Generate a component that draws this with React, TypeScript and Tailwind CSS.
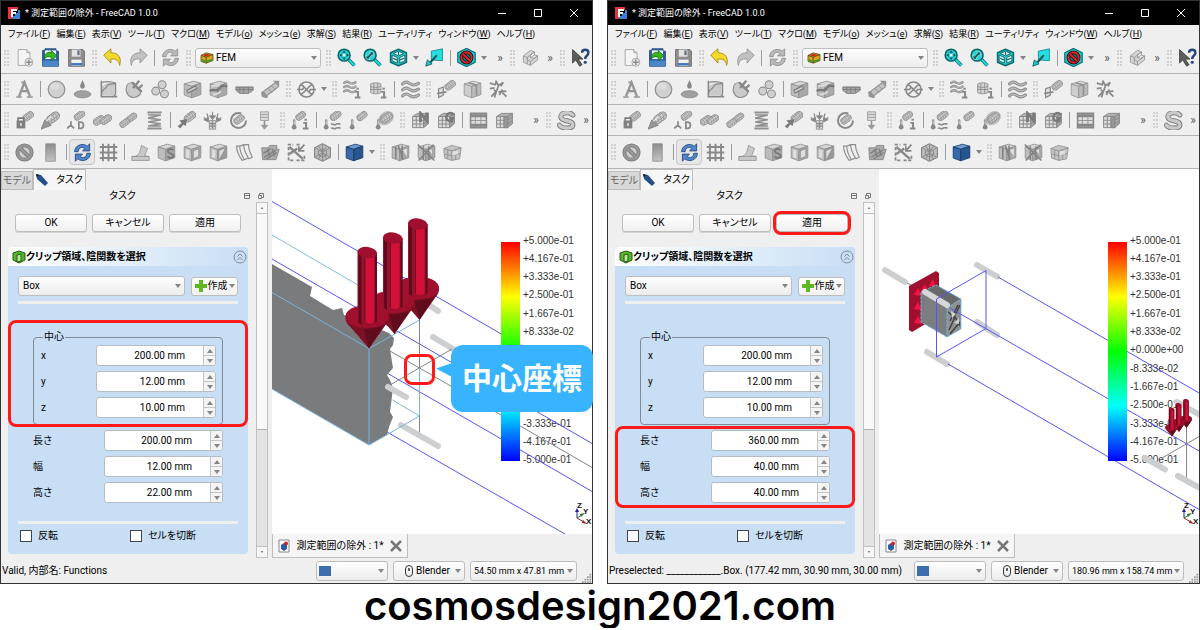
import { useId, ReactNode } from "react";
import clsx from "clsx";

const LINE = "#868686";
const FILL = "#c4c4c4";

/* ---------- icon building blocks, all on a 24x24 grid ---------- */

function Mesh({ transform }: { transform?: string }) {
  return (
    <g transform={transform} strokeLinecap="round">
      <path d="M8 15 16 9" stroke="#777" strokeWidth="14" />
      <path d="M8 15 16 9" stroke={FILL} strokeWidth="11.5" />
      <path
        d="M4 10c4 1 6 5 6 10M8 7c4 1 6 5 6 10M12 4c4 1 6 5 6 10M3 15 16 4M6 19 21 8M2 12l4 8M17 4l5 5"
        fill="none"
        stroke="#848484"
        strokeWidth="1.3"
      />
    </g>
  );
}

interface CubeProps {
  top?: string;
  left?: string;
  right?: string;
  line?: string;
}

function Cube({ top = "#d2d2d2", left = "#b4b4b4", right = "#9c9c9c", line = "#7c7c7c" }: CubeProps) {
  return (
    <g stroke={line} strokeLinejoin="round">
      <path d="M1.500 5 13 1.500 22.500 4 11 8z" fill={top} />
      <path d="M1.500 5 11 8v14.500L1.500 19z" fill={left} />
      <path d="M11 8 22.500 4v14.500L11 22.500z" fill={right} />
    </g>
  );
}

function Grid3({ children }: { children?: ReactNode }) {
  return (
    <g stroke="#777" strokeWidth="1.200">
      <path d="M2 7 8 3h14l-6 4z" fill="#a8a8a8" />
      <path d="M2 7h14v14H2z" fill="#dadada" />
      <path d="M16 7l6-4v13l-6 5z" fill="#999" />
      <path d="M6.700 7v14M11.400 7v14M2 11.700h14l6-4M2 16.400h14l6-4" fill="none" />
      {children}
    </g>
  );
}

const thermo = (
  <g>
    <path d="M4 12v7" stroke="#777" strokeWidth="3" strokeLinecap="round" />
    <circle cx="4" cy="20.500" r="3" fill="#777" />
    <path d="M4 12v5" stroke="#ddd" strokeWidth="1.200" />
  </g>
);

const waves = (
  <g fill="none" stroke="#7d7d7d" strokeWidth="4" strokeLinecap="round">
    <path d="M2 5c4-4 7-2 10 0s6 2 10-1M2 12.500c4-4 7-2 10 0s6 2 10-1M2 20c4-4 7-2 10 0s6 2 10-1" />
    <path d="M2 5c4-4 7-2 10 0s6 2 10-1M2 12.500c4-4 7-2 10 0s6 2 10-1M2 20c4-4 7-2 10 0s6 2 10-1" stroke="#b5b5b5" strokeWidth="1.500" />
  </g>
);

const info = (
  <g stroke="#777" fill="none" strokeWidth="2.500">
    <path d="M15.500 15h3.500v7M15 22h7" />
    <path d="M17 11h3" />
  </g>
);

const sync = (color: string, edge: string) => (
  <g fill={color} stroke={edge} strokeWidth="1" strokeLinejoin="round">
    <path d="M2 11C2 3 12-1 18 4l3-3v9h-9l3-3C11 4 7 6 6.500 11z" />
    <path d="M22 13c0 8-10 12-16 7l-3 3v-9h9l-3 3c4 3 8 1 8.500-4z" />
  </g>
);

const coloured = ["newFile", "open", "save", "undo", "refreshBlue", "zoomFit", "zoomSel", "isoCube", "viewArrow", "noEntry", "help", "blueCube"];

const icons: Record<string, ReactNode> = {
  newFile: (
    <g>
      <path d="M4 2h11l4 4v16H4z" fill="#f4f4f4" stroke="#9a9a9a" />
      <path d="M15 2v4h4" fill="#ddd" stroke="#9a9a9a" />
      <circle cx="17.500" cy="18" r="5" fill="#e8e8e8" stroke="#999" />
      <path d="M17.500 14.500v7M14 18h7" stroke="#8a8a8a" strokeWidth="1.800" />
    </g>
  ),
  open: (
    <g>
      <path d="M2 3h3V1h14v3h3v19H2z" fill="#2b62a8" stroke="#173c70" />
      <path d="M5 3h14v11H5z" fill="#eef3f7" />
      <path d="M2 16h20v7H2z" fill="#4d87c8" />
      <path d="M4 14C4 7 9 4 13 6V3l7 7-7 6v-4c-4-2-6-1-9 2z" fill="#37b51e" stroke="#1b6a12" />
    </g>
  ),
  save: (
    <g>
      <path d="M2 2h18l2 2v19H2z" fill="#8f8f8f" stroke="#5e5e5e" />
      <path d="M6 2h11v9H6z" fill="#e2e2e2" />
      <path d="M13 3h3v6h-3z" fill="#687687" />
      <path d="M5 14h14v9H5z" fill="#f1f1f1" stroke="#777" />
      <path d="M5 19h14v3H5z" fill="#3f78c4" />
    </g>
  ),
  undo: <path d="M1 9 10 1v5c9 0 14 6 11 16-1-6-4-9-11-8v5z" fill="#f5d92c" stroke="#9b8200" strokeLinejoin="round" />,
  redo: <path d="M23 9 14 1v5C5 6 0 12 3 22c1-6 4-9 11-8v5z" fill="#b9b9b9" stroke="#808080" strokeLinejoin="round" />,
  refresh: sync("#b0b0b0", "#777"),
  refreshBlue: sync("#4f86cc", "#1c3f73"),
  zoomFit: (
    <g>
      <path d="m14 14 8 8" stroke="#0e7d80" strokeWidth="4.500" />
      <path d="m14 14 8 8" stroke="#20dfe0" strokeWidth="2" />
      <circle cx="9" cy="9" r="7.500" fill="#27d5d8" stroke="#0b6669" strokeWidth="2" />
      <path d="M9 3 6.500 6h5zM9 15l-2.500-3h5zM3 9l3-2.500v5zM15 9l-3-2.500v5z" fill="#0b5356" />
      <path d="M7.500 7.500h3v3h-3z" fill="#fff" />
    </g>
  ),
  zoomSel: (
    <g>
      <path d="m14 14 8 8" stroke="#0e7d80" strokeWidth="4.500" />
      <path d="m14 14 8 8" stroke="#20dfe0" strokeWidth="2" />
      <circle cx="9" cy="9" r="7.500" fill="#27d5d8" stroke="#0b6669" strokeWidth="2" />
      <path d="M4 9v5h5l-1.500-1.500 4-4L13 10V5H8l1.500 1.500-4 4z" fill="#0b5356" stroke="#d8f8f8" strokeWidth=".7" />
    </g>
  ),
  isoCube: (
    <g strokeLinejoin="round">
      <path d="M12 1.500 22 6v12l-10 4.500L2 18V6z" fill="#25cfd2" stroke="#0b6e72" strokeWidth="2" />
      <path d="m12 4 6.500 3-6.500 3-6.500-3zM4 9l6.500 3v7L4 16.500zM20 9l-6.500 3v7l6.500-2.500z" fill="#d9f2f2" stroke="#0b5356" />
      <path d="M12 5v4M5 13l5 2M19 13l-5 2" stroke="#0b6e72" strokeWidth="1.500" />
    </g>
  ),
  viewArrow: (
    <g>
      <path d="m8 4 14-3v15L8 15z" fill="#22dfe2" stroke="#0d7e82" />
      <path d="m15 9-8 9" stroke="#0b5356" strokeWidth="2.500" />
      <path d="m1 23 2-8 6 5z" fill="#19c9cc" stroke="#0b5356" />
    </g>
  ),
  noEntry: (
    <g strokeLinejoin="round">
      <path d="M12 .5 23 6v12L12 23.500 1 18V6z" fill="#1fc9cc" stroke="#0b6e72" strokeWidth="1.500" />
      <circle cx="12" cy="12" r="6.500" fill="#178184" stroke="#111" strokeWidth="4.500" />
      <circle cx="12" cy="12" r="6.500" fill="none" stroke="#e2202a" strokeWidth="2.600" />
      <path d="m7.500 7.500 9 9" stroke="#111" strokeWidth="4.500" />
      <path d="m7.500 7.500 9 9" stroke="#e2202a" strokeWidth="2.600" />
    </g>
  ),
  part: (
    <g stroke="#808080" strokeLinejoin="round" fill="#d0d0d0">
      <path d="M3 10 12 3l5 2-5 4v3l4 1 5-3v5l-9 7-9-4z" />
      <path d="m3 10 5 2v8M8 12l9-7v4l4 1M12 12l5-3M8 12v3l4 2 9-7M12 17v5" fill="none" />
    </g>
  ),
  help: (
    <g>
      <path d="M2 2v17l4-4 5 8 3-2-5-7h6z" fill="#5c5f5c" stroke="#333" />
      <path d="M14 6c0-5 8-5 8 0 0 4-4 3-4 8" fill="none" stroke="#27457c" strokeWidth="3" />
      <circle cx="18" cy="18" r="2" fill="#27457c" />
    </g>
  ),
  letterA: (
    <g fill="none" stroke={LINE}>
      <path d="M5 21 12 3l7 18M8 14h8" strokeWidth="3" />
      <path d="M1.500 21.500h7M15 21.500h7.500M8 3h4" strokeWidth="2" />
    </g>
  ),
  sphere: (
    <g>
      <circle cx="12" cy="12" r="10.500" fill="#cbcbcb" stroke="#808080" strokeWidth="1.500" />
      <ellipse cx="10" cy="8" rx="6" ry="4" fill="#d9d9d9" />
    </g>
  ),
  drop: (
    <g fill="#929292">
      <path d="M12 0c2 5 3 6 3 8a3 3 0 0 1-6 0c0-2 1-3 3-8z" fill="#777" />
      <ellipse cx="12" cy="18" rx="10.500" ry="4.500" stroke="#777" />
    </g>
  ),
  chart: (
    <g>
      <path d="M3 19V9c4-5 11-7 18-6v16z" fill="#c4c4c4" />
      <path d="M3 1v20h20" fill="none" stroke="#777" strokeWidth="2" />
      <path d="M3 16c3-6 5-4 7-8s6-3 10-3M4 3c8-2 12-1 17 1v12c0 3-2 5-5 5" fill="none" stroke="#777" strokeWidth="1.500" />
    </g>
  ),
  plug: (
    <g>
      <path d="M4 5c-6 8 0 18 8 17 6-1 9-5 8-9z" fill="#c4c4c4" stroke="#808080" strokeWidth="1.500" />
      <path d="M2 7c2-3 5-4 8-4l9 9" fill="#c4c4c4" stroke="#808080" />
      <path d="m10 10 3-3M9 3l12 12M13 7l5-6M17 11l5-5" stroke="#777" strokeWidth="3" />
    </g>
  ),
  circles: (
    <g fill="#cacaca" stroke="#7c7c7c" strokeWidth="1.300">
      <circle cx="14" cy="6" r="5" />
      <circle cx="6" cy="14" r="5" />
      <circle cx="17" cy="17.500" r="5" />
    </g>
  ),
  cubeBeam: (
    <g>
      <Cube />
      <path d="m5 15 12-6" stroke="#666" strokeWidth="5" />
      <path d="m6 14.500 10-5" stroke="#c8c8c8" strokeWidth="2" />
    </g>
  ),
  cubeFlow: (
    <g>
      <Cube />
      <path d="M1 14c5-4 8 2 12-3s5-4 10-3" fill="none" stroke="#666" strokeWidth="3" />
      <path d="M3 8c5-3 7 2 10-2M5 19c5-3 7 0 10-5" fill="none" stroke="#ddd" strokeWidth="2" />
    </g>
  ),
  plate: (
    <g stroke="#666">
      <path d="M1 9h22v4l-6 4H6l-5-4z" fill="#999" />
      <path d="M1 9h22M6 9v7M11 9v8M17 9v7M1 12h22" />
    </g>
  ),
  rod: (
    <g>
      <path d="m4 18 16-12" stroke="#777" strokeWidth="8" />
      <path d="m4 18 16-12" stroke="#bbb" strokeWidth="5.500" />
      <path d="m0 15 3-1 6 7-2 2-6-2zM15 1h8v8z" fill="#858585" />
      <path d="m8 10 6 6M13 7l5 5" stroke="#777" />
    </g>
  ),
  crossCircle: (
    <g fill="none" stroke="#777" strokeWidth="2">
      <circle cx="12" cy="12" r="9.500" />
      <path d="M5 6c3 1 4 3 7 6s4 5 7 6M19 6c-3 1-4 3-7 6s-4 5-7 6M0 12h7l2-3M24 12h-7l-2 3" />
    </g>
  ),
  wavesInfo: (
    <g>
      <g transform="scale(.720)">{waves}</g>
      {info}
    </g>
  ),
  barrelInfo: (
    <g>
      <path d="M2 5c3-2 10-2 13 0v11c-3 2-10 2-13 0z" fill="#ccc" stroke="#777" />
      <path d="M2 8c3 2 10 2 13 0M6 4v13M11 4v13M2 12h13" fill="none" stroke="#777" />
      {info}
    </g>
  ),
  waves,
  meshPlane: (
    <g>
      <Mesh transform="translate(9 -1) scale(.640)" />
      <path d="M2 11 8 9v10l-6 3z" fill="#ddd" stroke="#777" strokeWidth="1.500" />
      <path d="m0 17 12-2" stroke="#777" strokeWidth="2" />
    </g>
  ),
  box: (
    <g>
      <Cube top="#dadada" left="#c8c8c8" right="#b2b2b2" line="#808080" />
      <path d="m7 3.500 10 3v13" fill="none" stroke="#808080" strokeWidth="2" />
    </g>
  ),
  spark: (
    <g fill="none" stroke="#777" strokeWidth="2.200">
      <path d="m1 4 7 2 1-4 3 5 6-4-3 5M12 7l-2 6-7 8M6 12l3 3-2 7M1 11l6-1M12 15l10-1M13 19l4-7M17 16l5 5" />
    </g>
  ),
  lock: (
    <g>
      <Mesh transform="translate(9 -1) scale(.640)" />
      <path d="M4 13V9h7v4" fill="none" stroke="#666" strokeWidth="2" />
      <path d="M2 12h11v10H2z" fill="#6d6d6d" />
      <path d="M7.500 15v4" stroke="#ddd" strokeWidth="2" />
    </g>
  ),
  pin: (
    <g>
      <Mesh transform="translate(6 -1) scale(.780)" />
      <path d="m0 23 5-12 8 7z" fill="#888" stroke="#666" />
      <path d="m7 13 6-6" stroke="#eee" strokeWidth="1.500" />
    </g>
  ),
  displacement: (
    <g>
      <Mesh transform="translate(8 -2) scale(.640)" />
      <path d="M5 13v5l-5 4M5 18l4 4M15 14v8h2c5 0 5-8 0-8z" fill="none" stroke="#777" strokeWidth="2.200" />
    </g>
  ),
  meshPair: (
    <g>
      <Mesh transform="translate(-1 4) scale(.700 .650)" />
      <Mesh transform="translate(8 3) scale(.700 .650)" />
    </g>
  ),
  mesh: (
    <g>
      <Mesh transform="translate(9 1) scale(.600)" />
      <Mesh transform="translate(0 8) scale(.600)" />
    </g>
  ),
  spring: (
    <g fill="none" stroke="#808080">
      <path d="M3 2h18M3 22h18" strokeWidth="2.500" />
      <path d="M4 5h16L4 9l16 2-16 3 16 2-16 3h16" strokeWidth="2" />
    </g>
  ),
  force: (
    <g>
      <Mesh transform="translate(8 -1) scale(.700)" />
      <path d="m13 10-2 9-3-2-4 5-3-3 5-4-3-3z" fill="#666" />
    </g>
  ),
  pressure: (
    <g fill="#777" stroke="#777">
      <path d="M8 12h8v11H8z" fill="#ccc" />
      <path d="M8 16h8M8 19h8M12 13v9M12 1v7M5 3l2 8M19 3l-2 8M1 8l5 5M23 8l-5 5" fill="none" strokeWidth="1.500" />
      <path d="M8 6h8l-4 5zM1 11l6-3v6zM23 11l-6-3v6z" />
    </g>
  ),
  spin: (
    <g fill="none">
      <circle cx="12" cy="12" r="9.500" stroke="#777" strokeWidth="2.500" strokeDasharray="48 12" />
      <Mesh transform="translate(5 3) scale(.640)" />
    </g>
  ),
  gravity: (
    <g stroke="#888" fill="#d6d6d6">
      <path d="M7 1h10v11H7zM7 4.500h10M7 8h10" />
      <path d="M12 12v8" strokeWidth="2" />
      <path d="M8 18h8l-4 5z" fill="#888" />
    </g>
  ),
  tempInfo: (
    <g>
      <Mesh transform="translate(5 -1) scale(.600)" />
      {thermo}
      {info}
    </g>
  ),
  tempFlow: (
    <g>
      <Mesh transform="translate(8 -2) scale(.660)" />
      {thermo}
      <path d="M10 17c3-2 4 2 6 0s3 0 6-1M10 22c3-2 4 2 6 0s3 0 6-1" fill="none" stroke="#777" strokeWidth="2" />
    </g>
  ),
  tempMesh: (
    <g>
      <Mesh transform="translate(9 -1) scale(.620)" />
      {thermo}
    </g>
  ),
  tempBody: (
    <g>
      <ellipse cx="14" cy="9" rx="10.500" ry="8" fill="#b0b0b0" transform="rotate(-35 14 9)" />
      <Mesh transform="translate(6 0) scale(.700)" />
      {thermo}
    </g>
  ),
  gridN: (
    <Grid3>
      <path d="M12 14V3l8 9V2" fill="none" stroke="#666" strokeWidth="3.500" />
    </Grid3>
  ),
  gridG: (
    <Grid3>
      <path d="M21 5c-4-5-10-1-9 4s8 5 8 0h-4" fill="none" stroke="#666" strokeWidth="3" />
    </Grid3>
  ),
  film: (
    <g stroke="#777" fill="#dcdcdc">
      <path d="M2 3h20v18H2z" strokeWidth="2" />
      <path d="M2 6h20M2 18h20" strokeWidth="4" />
      <path d="M8 3v18M15 3v18M2 12h20" />
    </g>
  ),
  gridBox: (
    <Grid3>
      <path d="M11.400 7h4.600v14h-4.600z" fill="#888" />
    </Grid3>
  ),
  solver: (
    <g fill="none" strokeLinecap="round">
      <path d="M20 5C15 0 4 2 5 8s15 3 15 9-13 6-17 1" stroke="#6d6d6d" strokeWidth="6.500" />
      <path d="M20 5C15 0 4 2 5 8s15 3 15 9-13 6-17 1" stroke="#c4c4c4" strokeWidth="4" />
    </g>
  ),
  banned: (
    <g fill="none">
      <circle cx="12" cy="12" r="9" fill="#c9c9c9" stroke="#6d6d6d" strokeWidth="5" />
      <path d="m6 6 12 12" stroke="#6d6d6d" strokeWidth="5" />
      <circle cx="12" cy="12" r="9" stroke="#8c8c8c" strokeWidth="2.500" />
      <path d="m6 6 12 12" stroke="#8c8c8c" strokeWidth="2.500" />
    </g>
  ),
  gradient: (
    <g>
      <linearGradient id="grey" x1="0" x2="0" y1="0" y2="1">
        <stop offset="0" stopColor="#7c7c7c" />
        <stop offset="1" stopColor="#bdbdbd" />
      </linearGradient>
      <path d="M6 1h12v22H6z" fill="url(#grey)" stroke="#777" />
    </g>
  ),
  hash: (
    <g fill="none" stroke="#777" strokeWidth="2.400">
      <path d="M5 1v22M12 1v22M19 1v22M1 5h22M1 12h22M1 19h22" />
    </g>
  ),
  bend: (
    <g stroke="#808080" strokeLinejoin="round">
      <path d="M1 17c8 1 11-5 12-14l8 4c-2 4-2 6-4 9l6 1v5H1z" fill="#c2c2c2" />
      <path d="M1 17h22" />
    </g>
  ),
  cubeS: (
    <g>
      <Cube />
      <path d="M21 9c-3-3-8-1-7 2s7 2 7 5-5 4-8 1" fill="none" stroke="#666" strokeWidth="2.500" />
    </g>
  ),
  cubeOpen: (
    <g>
      <Cube />
      <path d="m13 10 7-3v10l-7 3z" fill="#ddd" stroke="#777" />
      <path d="m4 8 4 1v10l-4-1z" fill="#ddd" />
    </g>
  ),
  cubeSlice: (
    <g>
      <Cube right="#8a8a8a" />
      <path d="M13 10v10l7-13z" fill="#ddd" />
      <path d="m4 8 4 1v10l-4-1z" fill="#ddd" />
    </g>
  ),
  sheets: (
    <g fill="none" stroke="#808080" strokeWidth="1.500">
      <path d="M2 4h4c0 8 3 12 6 17l-3 1C4 15 2 11 2 4zM6 4l5-2c0 8 3 12 6 17l-5 2M11 2h6c0 7 2 10 5 16l-5 2" />
    </g>
  ),
  folder: (
    <g>
      <path d="M1 6h8l2-3h9v5h3l-4 13H2z" fill="#a0a0a0" stroke="#6d6d6d" />
      <path d="m4 18 15-9M7 20 20 12M3 13l9-6M8 8l4 10M14 7l3 9" stroke="#6d6d6d" strokeWidth="1.800" />
    </g>
  ),
  probe: (
    <g fill="none" stroke="#777" strokeWidth="2.200">
      <path d="M2 9V2h6M12 2h5M2 12v10h7M12 22h10v-6" strokeDasharray="4 2" />
      <path d="M3 5 20 20M3 14l10-7" strokeWidth="3" />
      <path d="m15 10 7-8M15 4v6h7" />
    </g>
  ),
  hexMesh: (
    <g stroke="#777" strokeLinejoin="round">
      <path d="M12 1 22 6v12l-10 5-10-5V6z" fill="#b4b4b4" strokeWidth="1.500" />
      <path d="M12 2v20M3 6l18 12M21 6 3 18M7 4l10 16M17 4 7 20M12 7l5 3v5l-5 3-5-3v-5z" fill="none" strokeWidth="1.200" />
    </g>
  ),
  blueCube: <Cube top="#6b9bd2" left="#3669ae" right="#275590" line="#15355f" />,
  clipA: (
    <g>
      <Cube />
      <path d="M6 4v16M9 3l6 17M14 3v18" stroke="#6f6f6f" strokeWidth="2" />
      <path d="m15 9 5-2v10z" fill="#e0e0e0" />
    </g>
  ),
  clipB: (
    <g>
      <Cube />
      <path d="m1 2 21 20M21 2 2 22M8 4v17M15 4v17" stroke="#6f6f6f" strokeWidth="1.800" />
      <path d="m15 9 4-1v6z" fill="#e0e0e0" />
    </g>
  ),
  clipC: (
    <g>
      <path d="m1 7 10-4 12 3-2 14-10 2-9-3z" fill="#bdbdbd" stroke="#7c7c7c" />
      <path d="m1 7 10 3 12-4M11 10v12M6 9v11M16 8v13M2 14l9 2 11-3" fill="none" stroke="#777" />
      <path d="m12 11 7-2v5l-7 2z" fill="#ddd" />
    </g>
  ),
};

/* ---------- toolbar parts ---------- */

function Tool({ name, active }: { name: string; active?: boolean }) {
  return (
    <button
      type="button"
      aria-label={name}
      className={clsx(
        "flex h-[26px] w-[26px] shrink-0 items-center justify-center rounded-sm",
        active && "border border-[#c6c6c6] bg-[#e6e6e6]"
      )}
    >
      <svg viewBox="0 0 24 24" className={clsx("h-[19px] w-[19px] shrink-0", !coloured.includes(name) && "opacity-85")} fill="none">
        {icons[name]}
      </svg>
    </button>
  );
}

function Grip({ className }: { className?: string }) {
  return (
    <span className={clsx("flex w-[10px] shrink-0 justify-center gap-px", className)}>
      <span className="h-4 border-l-2 border-dotted border-[#cfcfcf]" />
      <span className="h-4 border-l-2 border-dotted border-[#cfcfcf]" />
    </span>
  );
}

function Sep() {
  return (
    <span className="flex w-[6px] shrink-0 justify-center">
      <span className="h-4 w-px bg-[#9b9b9b]" />
    </span>
  );
}

function Arrow({ className, up }: { className?: string; up?: boolean }) {
  return (
    <svg viewBox="0 0 6 4" className={clsx("h-1 w-1.5 shrink-0", className)} fill="#858585">
      {up ? <path d="M0 4h6L3 0z" /> : <path d="M0 0h6L3 4z" />}
    </svg>
  );
}

function Drop() {
  return (
    <button type="button" aria-label="menu" className="flex h-[26px] w-[10px] shrink-0 items-center justify-center">
      <Arrow />
    </button>
  );
}

function More({ className }: { className?: string }) {
  return (
    <button type="button" className={clsx("w-[14px] shrink-0 text-center text-[12px] leading-3 text-[#555]", className)}>
      »
    </button>
  );
}

function Tools({ names }: { names: string[] }) {
  return (
    <>
      {names.map((name) => (
        <Tool key={name} name={name} />
      ))}
    </>
  );
}

interface PickerProps {
  label: string;
  value: string;
  className?: string;
  selectClassName?: string;
  children?: ReactNode;
}

function Picker({ label, value, className, selectClassName, children }: PickerProps) {
  return (
    <div
      className={clsx(
        "relative flex h-5 shrink-0 items-center rounded-[3px] border border-[#bdbdbd] bg-linear-to-b from-[#fefefe] to-[#ececec]",
        className
      )}
    >
      <span className="pointer-events-none absolute left-1 flex items-center">{children}</span>
      <select aria-label={label} className={clsx("h-full w-full appearance-none bg-transparent text-black", selectClassName)}>
        <option>{value}</option>
      </select>
      <Arrow className="pointer-events-none absolute right-[3px]" />
    </div>
  );
}

function Toolbars() {
  const row = "flex items-center overflow-hidden border-b border-[#b4b4b4]";
  return (
    <div>
      <div className={clsx(row, "h-8")}>
        <Grip />
        <Tools names={["newFile", "open", "save"]} />
        <Grip />
        <Tools names={["undo", "redo"]} />
        <Sep />
        <Tool name="refresh" />
        <Grip />
        <Picker label="ワークベンチ" value="FEM" className="ml-0.5 w-[126px]" selectClassName="pl-5">
          <svg viewBox="0 0 16 14" className="h-3 w-3.5">
            <path d="m1 4 6-3 8 2v7l-8 3-6-2z" fill="#e2a01d" stroke="#4e5a16" />
            <path d="m1 4 6 2 8-3M7 6v7" stroke="#3c4b12" fill="none" />
            <path d="M2 3.500 7 2l6 1.500L7 5z" fill="#cf2b1d" />
            <path d="m2 8 4 2v2l-4-1zM8 10l6-2v2l-6 2z" fill="#3c9a30" />
          </svg>
        </Picker>
        <Grip className="ml-0.5" />
        <Tools names={["zoomFit", "zoomSel", "isoCube"]} />
        <Drop />
        <Tool name="viewArrow" />
        <Sep />
        <Tool name="noEntry" />
        <Drop />
        <More className="ml-1" />
        <Grip />
        <Tool name="part" />
        <More />
        <Grip />
        <Tool name="help" />
      </div>
      <div className={clsx(row, "h-[31px]")}>
        <Grip />
        <Tool name="letterA" />
        <Sep />
        <Tools names={["sphere", "drop", "chart", "plug", "circles"]} />
        <Sep />
        <Tools names={["cubeBeam", "cubeFlow", "plate", "rod"]} />
        <Grip />
        <Tool name="crossCircle" />
        <Drop />
        <Grip />
        <Tools names={["wavesInfo", "barrelInfo"]} />
        <Sep />
        <Tool name="waves" />
        <Grip />
        <Tools names={["meshPlane", "box", "spark"]} />
      </div>
      <div className={clsx(row, "h-[31px]")}>
        <Grip />
        <Tools names={["lock", "pin", "displacement", "meshPair", "mesh", "spring"]} />
        <Sep />
        <Tools names={["force", "pressure", "spin", "gravity"]} />
        <Grip />
        <Tool name="tempInfo" />
        <Sep />
        <Tools names={["tempFlow", "tempMesh", "tempBody"]} />
        <Grip />
        <Tools names={["gridN", "gridG"]} />
        <Sep />
        <Tools names={["film", "gridBox"]} />
        <More className="ml-3" />
        <Grip />
        <Tool name="solver" />
        <More />
      </div>
      <div className={clsx(row, "h-[33px]")}>
        <Grip />
        <Tools names={["banned", "gradient"]} />
        <Sep />
        <Tool name="refreshBlue" active />
        <Tool name="hash" />
        <Sep />
        <Tools names={["bend", "cubeS", "cubeOpen", "cubeSlice", "sheets", "folder", "probe", "hexMesh"]} />
        <Sep />
        <Tool name="blueCube" />
        <Drop />
        <Grip />
        <Tools names={["clipA", "clipB", "clipC"]} />
      </div>
    </div>
  );
}

/* ---------- title and menu ---------- */

const menus: [string, string][] = [
  ["ファイル", "F"],
  ["編集", "E"],
  ["表示", "V"],
  ["ツール", "T"],
  ["マクロ", "M"],
  ["モデル", "o"],
  ["メッシュ", "e"],
  ["求解", "S"],
  ["結果", "R"],
  ["ユーティリティ", ""],
  ["ウィンドウ", "W"],
  ["ヘルプ", "H"],
];

function TitleBar() {
  return (
    <header className="flex h-6 items-center bg-black pr-3 pl-[7px] text-[9px] text-white">
      <svg viewBox="0 0 12 12" className="h-3 w-3">
        <path d="M0 0h10v3H4v9H0z" fill="#e8323c" />
        <path d="M4 9h3V6h3V3h2v9H4z" fill="#3d7fd6" />
        <path d="M3 2h6v2H5v1h3v2H5v3H3z" fill="#fff" />
      </svg>
      <h1 className="ml-[5px] flex-1 whitespace-nowrap">* 測定範囲の除外 - FreeCAD 1.0.0</h1>
      <div className="flex gap-6">
        <button type="button" aria-label="最小化">
          <svg viewBox="0 0 12 12" className="h-3 w-3" stroke="#fff">
            <path d="M2 6.500h8" />
          </svg>
        </button>
        <button type="button" aria-label="最大化">
          <svg viewBox="0 0 12 12" className="h-3 w-3" stroke="#fff" fill="none">
            <path d="M2.500 2.500h7v7h-7z" />
          </svg>
        </button>
        <button type="button" aria-label="閉じる">
          <svg viewBox="0 0 12 12" className="h-3 w-3" stroke="#fff">
            <path d="m2 2 8 8M10 2l-8 8" />
          </svg>
        </button>
      </div>
    </header>
  );
}

function MenuBar() {
  return (
    <nav className="flex h-[17px] items-center gap-1.5 overflow-hidden px-[7px] text-[9px]">
      {menus.map(([text, key]) => (
        <button key={text} type="button" className="shrink-0 whitespace-nowrap">
          {text}
          {key && (
            <>
              (<u>{key}</u>)
            </>
          )}
        </button>
      ))}
    </nav>
  );
}

/* ---------- task panel ---------- */

function Highlight({ className }: { className: string }) {
  return <span className={clsx("pointer-events-none absolute rounded-lg border-[3px] border-[#ff1a1a]", className)} />;
}

function Spin({ label, value, indent }: { label: string; value: string; indent: string }) {
  const id = useId();
  return (
    <div className="flex h-[21px] items-center">
      <label htmlFor={id} className={clsx("shrink-0", indent)}>
        {label}
      </label>
      <div className="flex h-full flex-1 overflow-hidden rounded-[3px] border border-[#b5bcc4] bg-white">
        <input id={id} defaultValue={value} className="w-0 flex-1 bg-transparent pr-[18px] text-right outline-none" />
        <div className="flex w-3 flex-col divide-y divide-[#c4c4c4] border-l border-[#c4c4c4] bg-[#f4f4f4]">
          <button type="button" aria-label={label + " +"} className="flex flex-1 items-center justify-center">
            <Arrow up />
          </button>
          <button type="button" aria-label={label + " -"} className="flex flex-1 items-center justify-center">
            <Arrow />
          </button>
        </div>
      </div>
    </div>
  );
}

function Check({ label }: { label: string }) {
  return (
    <label className="flex flex-1 items-center gap-1.5 pl-0.5 leading-3">
      <input type="checkbox" className="h-3 w-3 appearance-none border border-[#444] bg-white" />
      {label}
    </label>
  );
}

interface ViewState {
  sizes: string[];
  focus: "center" | "size";
}

function TaskPanel({ sizes, focus }: ViewState) {
  const button =
    "relative h-[18px] flex-1 rounded-[3px] border border-[#bdbdbd] bg-linear-to-b from-white to-[#f0f0f0] leading-4 shadow-[0_1px_0_#d4d4d4]";
  return (
    <aside className="flex w-[271px] shrink-0 flex-col">
      <div role="tablist" className="flex h-[21px] items-end">
        <button type="button" role="tab" className="h-[19px] w-8 border border-[#bdbdbd] bg-[#d8d8d8] text-[#666]">
          モデル
        </button>
        <button
          type="button"
          role="tab"
          aria-selected
          className="flex h-[21px] w-[53px] items-center justify-center gap-2 border border-b-0 border-[#bdbdbd] bg-[#f6f6f6]"
        >
          <svg viewBox="0 0 12 12" className="h-3 w-3">
            <path d="m0 0 5 1 7 8-3 3-8-7z" fill="#284f86" />
            <path d="m0 0 3 1-2 2z" fill="#111" />
          </svg>
          タスク
        </button>
      </div>
      <div className="flex h-3 items-center gap-[6px] pr-[7px] pl-[7px]">
        <h2 className="flex-1 text-center leading-3">タスク</h2>
        <svg viewBox="0 0 8 8" className="h-2 w-2" fill="none" stroke="#777">
          <path d="M1.500 1.500h5v5h-5zM1 3.500h6" />
        </svg>
        <svg viewBox="0 0 8 8" className="h-2 w-2" fill="none" stroke="#777">
          <path d="M2.500 3V1.500h4v4H5M1.500 3.500h3v3h-3z" />
        </svg>
      </div>
      <div className="flex flex-1">
        <div className="flex flex-1 flex-col pt-3 pr-2 pl-[7px]">
          <div className="flex gap-[5px] px-[7px]">
            <button type="button" className={button}>
              OK
            </button>
            <button type="button" className={button}>
              キャンセル
            </button>
            <button type="button" className={button}>
              適用
              {focus === "size" && <Highlight className="-inset-1" />}
            </button>
          </div>
          <section className="mt-[15px] rounded-sm bg-[#c8def5]">
            <div className="flex h-[19px] items-center justify-between rounded-t-sm bg-linear-to-r from-white to-[#c8def5] pr-px pl-1">
              <h3 className="flex items-center font-bold whitespace-nowrap">
                <svg viewBox="0 0 14 14" className="h-3.5 w-3.5">
                  <path d="m1 3 6-2 6 2v7l-6 3-6-3z" fill="#57b52b" stroke="#245c12" />
                  <path d="m5 5 4-1v7l-4 1z" fill="#b8e79b" stroke="#245c12" />
                </svg>
                クリップ領域、陰関数を選択
              </h3>
              <button type="button" aria-label="折りたたむ">
                <svg viewBox="0 0 14 14" className="h-3.5 w-3.5" fill="none" stroke="#7f8b98">
                  <circle cx="7" cy="7" r="6" />
                  <path d="m4.500 6.500 2.500-2.500 2.500 2.500M4.500 10 7 7.500 9.500 10" />
                </svg>
              </button>
            </div>
            <div className="px-2.5 pt-2.5 pb-3">
              <div className="flex items-center gap-1.5">
                <Picker label="陰関数" value="Box" className="flex-1" selectClassName="pl-1" />
                <button
                  type="button"
                  className="flex h-[19px] w-[47px] shrink-0 items-center justify-center gap-px rounded-[3px] border border-[#bdbdbd] bg-linear-to-b from-white to-[#f0f0f0]"
                >
                  <svg viewBox="0 0 12 12" className="h-3 w-3 shrink-0">
                    <path d="M4 0h4v4h4v4H8v4H4V8H0V4h4z" fill="#5fb81f" />
                  </svg>
                  <span className="whitespace-nowrap">作成</span>
                  <Arrow />
                </button>
              </div>
              <hr className="mt-[5px] h-[3px] border-0 bg-[#eeeeee]" />
              <div className="relative mx-[15px] mt-[26px]">
                <fieldset className="rounded-sm border border-[#7f8a96] pt-px pr-1.5 pb-1.5 pl-[7px]">
                  <legend className="ml-0.5 px-px leading-[14px]">中心</legend>
                  <div className="flex flex-col gap-[5px]">
                    <Spin label="x" value="200.00 mm" indent="w-[55px]" />
                    <Spin label="y" value="12.00 mm" indent="w-[55px]" />
                    <Spin label="z" value="10.00 mm" indent="w-[55px]" />
                  </div>
                </fieldset>
                {focus === "center" && <Highlight className="-inset-x-[25px] -top-[10px] -bottom-[2px]" />}
              </div>
              <div className="relative mx-[15px] mt-[5px] flex flex-col gap-[5px]">
                <Spin label="長さ" value={sizes[0]} indent="w-[71px]" />
                <Spin label="幅" value={sizes[1]} indent="w-[71px]" />
                <Spin label="高さ" value={sizes[2]} indent="w-[71px]" />
                {focus === "size" && <Highlight className="-inset-x-[25px] -top-1 -bottom-[5px]" />}
              </div>
              <hr className="mt-[18px] h-[3px] border-0 bg-[#eeeeee]" />
              <div className="mt-1.5 flex">
                <Check label="反転" />
                <Check label="セルを切断" />
              </div>
            </div>
          </section>
        </div>
        <div className="mr-1 flex w-3 flex-col border border-[#c0c0c0] bg-[#e3e3e3]">
          <span className="flex h-[11px] items-center justify-center border-b border-[#c0c0c0] bg-[#f7f7f7]">
            <Arrow up className="scale-50" />
          </span>
          <span className="h-[216px] border-b border-[#b0b0b0] bg-[#f9f9f9]" />
          <span className="flex-1" />
          <span className="flex h-[11px] items-center justify-center border-t border-[#c0c0c0] bg-[#f7f7f7]">
            <Arrow className="scale-50" />
          </span>
        </div>
      </div>
    </aside>
  );
}

/* ---------- 3D view ---------- */

const scale = [
  "+5.000e-01",
  "+4.167e-01",
  "+3.333e-01",
  "+2.500e-01",
  "+1.667e-01",
  "+8.333e-02",
  "+0.000e+00",
  "-8.333e-02",
  "-1.667e-01",
  "-2.500e-01",
  "-3.333e-01",
  "-4.167e-01",
  "-5.000e-01",
];

// coordinates are those of the whole sheet, x is the left edge of the bar
function Labels({ x, covered = [] }: { x: number; covered?: number[] }) {
  return (
    <g fill="#333" fontSize="10" fontFamily="Liberation Sans, sans-serif">
      {scale.map(
        (text, i) =>
          !covered.includes(i) && (
            <text key={text} x={x + 22} y={Math.round(243.500 + i * 18.300)}>
              {text}
            </text>
          )
      )}
    </g>
  );
}

function Bar({ x }: { x: number }) {
  return (
    <>
      <linearGradient id={"rainbow" + x} x1="0" x2="0" y1="0" y2="1">
        <stop offset="0" stopColor="#ff0000" />
        <stop offset=".250" stopColor="#ffff00" />
        <stop offset=".500" stopColor="#00ff00" />
        <stop offset=".750" stopColor="#00ffff" />
        <stop offset="1" stopColor="#0000ff" />
      </linearGradient>
      <rect x={x} y="242" width="19" height="219" fill={`url(#rainbow${x})`} />
    </>
  );
}

function Axes({ x }: { x: number }) {
  return (
    <g transform={`translate(${x} 518)`} fontSize="8" fontWeight="700" fontFamily="Liberation Sans, sans-serif" fill="#111">
      <path d="M0 0v-8" stroke="#23238e" />
      <path d="m-2-6 2-4 2 4z" fill="#23238e" />
      <path d="m0 0 5-3" stroke="#1d7a2a" />
      <path d="m3-4 5-1-4 4z" fill="#1d7a2a" />
      <path d="m0 0 7 4" stroke="#9c2020" />
      <path d="m6 2 4 4-5-1z" fill="#9c2020" />
      <text x="0" y="-10">Z</text>
      <text x="6" y="-4">Y</text>
      <text x="9" y="6">X</text>
    </g>
  );
}

// load arrow with its tip at the origin
function Load({ transform }: { transform: string }) {
  return (
    <g transform={transform}>
      <path d="M-23.500-31c0-16 43-16 43 0 0 4-2 6-4 9L0 0-19-22c-3-3-4.500-5-4.500-9z" fill="#7c1024" />
      <path d="M0 0-5-19 14-22z" fill="#600c1c" />
      <ellipse cx="-2" cy="-32" rx="21.500" ry="11.500" fill="#a0102e" />
      <path d="M-11.500-97v70c4 5 15 5 19.500 0v-69z" fill="#98102c" />
      <path d="M-10.500-96v70l3 2v-71zM6-95l2-1v69l-2 1z" fill="#5f0b1b" />
      <path d="M-4-91H5v64c-3 3-6 3-9 0z" fill="#d31138" />
      <path d="M-4-91v64" stroke="#6d0e20" strokeWidth="1" />
      <ellipse cx="-1.750" cy="-96" rx="9.800" ry="5.500" fill="#a0102e" transform="rotate(8 -1.750 -96)" />
    </g>
  );
}

const rodStyle = { stroke: "#cdced0", strokeWidth: 6, strokeLinecap: "round" as const };

function CenterScene() {
  return (
    <svg viewBox="272 169 320 365" className="block h-full w-full" fill="none">
      <Labels x={501} covered={[6, 7, 8, 9]} />
      <path {...rodStyle} d="m426 303 12 8M433 337l25 15" />
      <g stroke="#5656f5">
        <path d="m272 201.500 321 185.500M272 259l321 185M387 373l206 119M387 432l178 102" />
      </g>
      <path d="m272 235 98 57" stroke="#82bce6" />
      <path d="m390 351 203 117M390 385l62-36M419.500 320v113" stroke="#858585" />
      <path
        d="M272 264 312 287 310 296 333 310 342 308 344 315 389 333 394 338 393 345 390 349 392 362 393 368 387 375 390 380 393 388 390 412 393 417 389 427 387 435 369 445 272 389z"
        fill="#797b7c"
      />
      <path {...rodStyle} d="m388 387 18 10M401 425l37 21" />
      <path
        d="m272 292.500 97 56v96.500l-97-56M369 348.500l50.500-28.500M369 445l50.500-29-27-16M419.500 368v48"
        stroke="#7ab4de"
      />
      <Bar x={501} />
      <Load transform="translate(419.500 320)" />
      <Load transform="translate(394.500 334)" />
      <Load transform="translate(369 348.500)" />
      <Axes x={577} />
    </svg>
  );
}

function SizeScene() {
  return (
    <svg viewBox="879 169 320 365" className="block h-full w-full" fill="none">
      <Labels x={1108} />
      <path d="m905 282 14 7" stroke="#777" />
      <path d="m909 286 27-15 3 2v43l-27 16-3-2z" fill="#a0102e" />
      <path
        d="m933 279-4 7 7 1zM925 284l-4 7 7 1zM918 288l-4 7 8 1zM918 302l-4 7 8 1zM918 316l-4 7 8 1z"
        fill="#f41443"
      />
      <path {...rodStyle} d="m885 270 20 12M977 265l20 11.500M977 322l20 13M927 352l20 12" />
      <path d="m921 292 26 16v29l-26-15z" fill="#7b7d7e" />
      <path d="m921 292 15-7 25 14-14 9z" fill="#67696a" />
      <path d="m947 308 14-9v30l-14 8z" fill="#8f9192" />
      <path d="m948 312 6 5 6-12M949 330l6-13 5 9M950 334l10-12M950 321l8-16" stroke="#3f4142" strokeWidth="1.500" />
      <path d="m951 311 5 3-4 4zM954 323l5-5v6z" fill="#cfd0d1" />
      <path d="m921 292 15-7 25 14v30l-14 8-26-15zM947 308v29M947 308l14-9" stroke="#6fb2e2" strokeDasharray="3 1" />
      <path d="m925 292 22 13" stroke="#d6d7d8" strokeWidth="6" strokeLinecap="round" />
      <path d="m1162 458 38-22M1186.500 426v54" stroke="#858585" />
      <g stroke="#5656f5">
        <path d="m936.500 299 49.500-28.500v58L936.500 357zM998 277l202 116.500M950 308l250 143.500M948 364l252 146" />
      </g>
      <path {...rodStyle} d="m1177 402 23 13M1145 458l20 11.500M1178 476l22 12" />
      <Bar x={1108} />
      <Load transform="translate(1186.500 428) scale(.285)" />
      <Load transform="translate(1179 432) scale(.285)" />
      <Load transform="translate(1172 436.500) scale(.285)" />
      <Axes x={1184} />
    </svg>
  );
}

function Callout() {
  return (
    <>
      <Highlight className="top-[185px] left-[132px] h-[31px] w-[31px] rounded-[5px]" />
      <div className="absolute top-[176px] -right-px flex h-[67px] w-[142px] items-center justify-center rounded-xl bg-[#38b4ff] text-[30px] font-bold text-white">
        <svg viewBox="0 0 16 16" className="absolute top-4 -left-[15px] h-4 w-4" fill="#38b4ff">
          <path d="m0 7.500 16-5.500v14z" />
        </svg>
        中心座標
      </div>
    </>
  );
}

/* ---------- windows ---------- */

function DocumentTab() {
  return (
    <div className="flex h-6">
      <div className="flex w-[136px] items-center border border-t-0 border-[#bdbdbd] bg-[#f5f5f5] pl-[5px]">
        <svg viewBox="0 0 12 14" className="h-3.5 w-3">
          <path d="M1 1h10v12H1z" fill="#fff" stroke="#888" />
          <path d="m3 6 3-2 3 2v4l-3 2-3-2z" fill="#2c5ea6" />
          <circle cx="8" cy="4.500" r="2" fill="#d32222" />
        </svg>
        <span className="ml-1.5 flex-1 text-center whitespace-nowrap">測定範囲の除外 : 1*</span>
        <button type="button" aria-label="タブを閉じる" className="mr-[5px] ml-1.5">
          <svg viewBox="0 0 12 12" className="h-3 w-3" stroke="#777" strokeWidth="2.500">
            <path d="m1 1 10 10M11 1 1 11" />
          </svg>
        </button>
      </div>
    </div>
  );
}

function StatusBar({ status, dimensions, wide }: { status: string; dimensions: string; wide?: boolean }) {
  return (
    <footer className="flex h-[25px] items-center gap-[5px] pl-px">
      <p className="flex-1 overflow-hidden whitespace-nowrap">{status}</p>
      <Picker label="表示" value=" " className="w-[72px]">
        <span className="-ml-0.5 h-2.5 w-3 bg-[#3b6fae]" />
      </Picker>
      <Picker label="ナビゲーション" value="Blender" className="w-[72px]" selectClassName="pl-[22px]">
        <svg viewBox="0 0 10 12" className="ml-1.5 h-3 w-2.5" fill="none" stroke="#333">
          <rect x="1.500" y=".500" width="7" height="11" rx="3.500" />
          <path d="M5 3v3" strokeWidth="1.500" />
        </svg>
      </Picker>
      <Picker
        label="寸法"
        value={dimensions}
        className={wide ? "w-[116px]" : "w-[107px]"}
        selectClassName="pl-[3px] text-[9px]"
      />
      <svg viewBox="0 0 12 12" className="h-2.5 w-2.5 self-end" fill="#999">
        <path d="M9 1h2v2H9zM6 4h2v2H6zM9 4h2v2H9zM3 7h2v2H3zM6 7h2v2H6zM9 7h2v2H9zM0 10h2v2H0zM3 10h2v2H3zM6 10h2v2H6zM9 10h2v2H9z" />
      </svg>
    </footer>
  );
}

interface WindowProps extends ViewState {
  status: string;
  dimensions: string;
  wide?: boolean;
  children: ReactNode;
}

function FreeCadWindow({ sizes, focus, status, dimensions, wide, children }: WindowProps) {
  return (
    <section className="flex min-w-0 flex-col border border-[#333] bg-[#efefef]">
      <TitleBar />
      <MenuBar />
      <Toolbars />
      <div className="flex">
        <TaskPanel sizes={sizes} focus={focus} />
        <main className="flex min-w-0 flex-1 flex-col">
          <div className="relative h-[365px] bg-white">{children}</div>
          <DocumentTab />
        </main>
      </div>
      <StatusBar status={status} dimensions={dimensions} wide={wide} />
    </section>
  );
}

export default function App() {
  return (
    <div className="bg-white font-['Roboto','Noto_Sans_CJK_JP',sans-serif] text-[10px] leading-[14px] text-black [font-feature-settings:'palt']">
      <div className="grid grid-cols-2 gap-[14px]">
        <FreeCadWindow
          sizes={["200.00 mm", "12.00 mm", "22.00 mm"]}
          focus="center"
          status="Valid, 内部名: Functions"
          dimensions="54.50 mm x 47.81 mm"
        >
          <CenterScene />
          <Callout />
        </FreeCadWindow>
        <FreeCadWindow
          sizes={["360.00 mm", "40.00 mm", "40.00 mm"]}
          focus="size"
          status="Preselected: ____________.Box. (177.42 mm, 30.90 mm, 30.00 mm)"
          dimensions="180.96 mm x 158.74 mm"
          wide
        >
          <SizeScene />
        </FreeCadWindow>
      </div>
      <p className="text-center font-['Inter','Open_Sans',sans-serif] text-[40px] leading-[44px] font-semibold">cosmosdesign2021.com</p>
    </div>
  );
}
